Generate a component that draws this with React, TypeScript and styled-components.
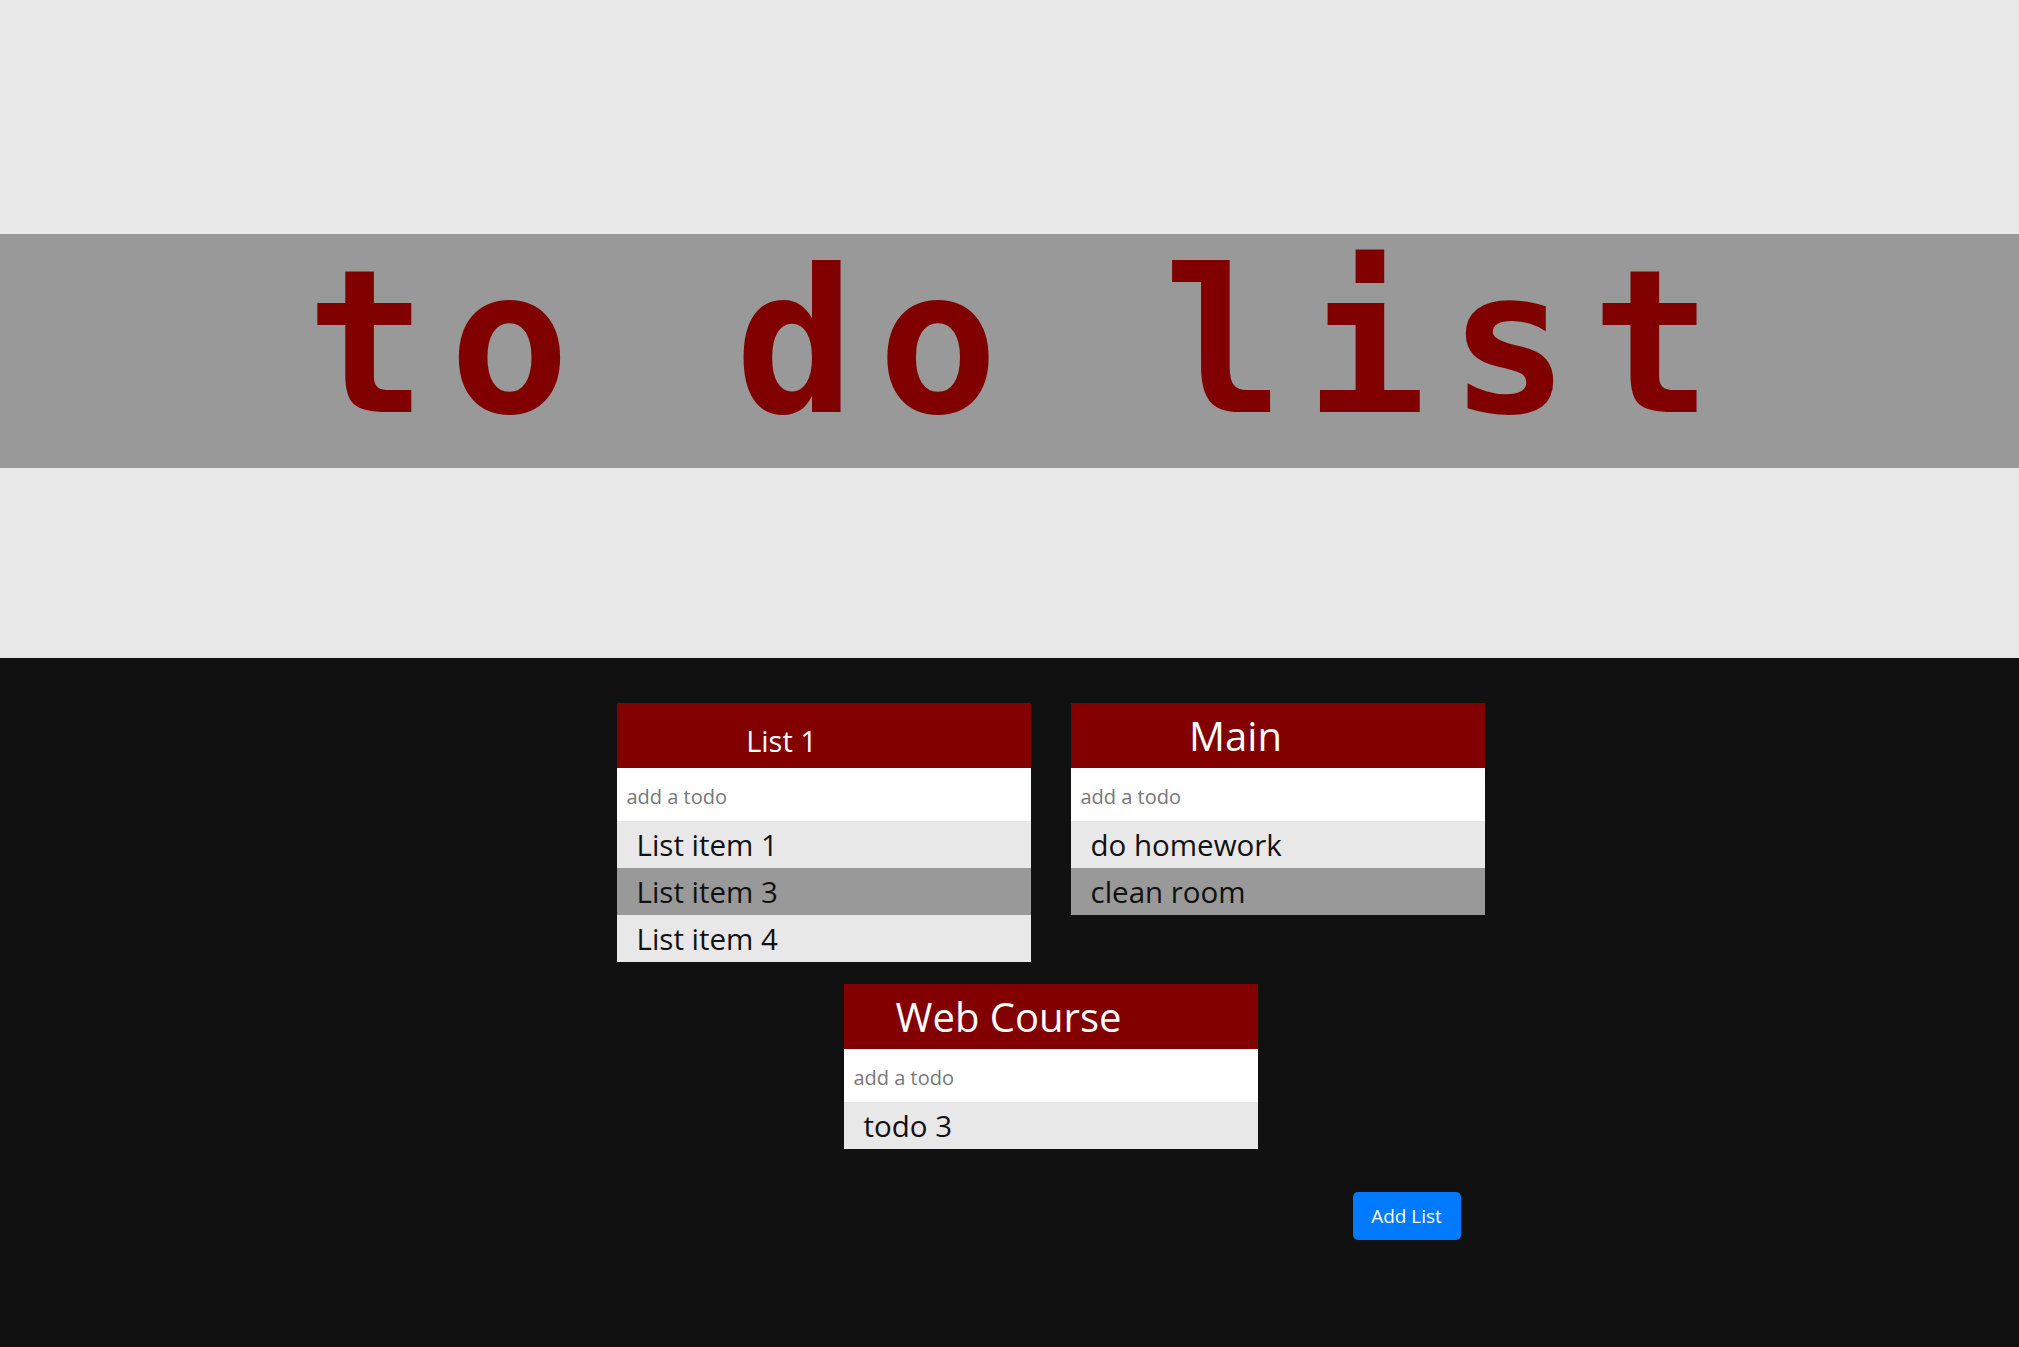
import React from "react";
import styled, { createGlobalStyle } from "styled-components";

const GlobalStyle = createGlobalStyle`
  html, body {
    margin: 0;
    padding: 0;
    background: #111111;
    font-family: "Open Sans", "Noto Sans", Arial, sans-serif;
  }
  * { box-sizing: border-box; }
`;

const Hero = styled.header`
  background: #e8e8e8;
  padding-top: 234px;
  padding-bottom: 190px;
`;

const Banner = styled.h1`
  margin: 0;
  background: #999999;
  color: #800000;
  font-family: "DejaVu Sans Mono", "Liberation Mono", monospace;
  font-weight: bold;
  font-size: 200px;
  letter-spacing: 22.4px;
  line-height: 218px;
  padding: 0 0 16px 22px;
  text-align: center;
  white-space: pre;
`;

const Main = styled.main`
  padding: 45px 0 60px 82px;
`;

const Board = styled.section`
  width: 1000px;
  margin: 0 auto;
  display: flex;
  flex-wrap: wrap;
  justify-content: center;
  align-items: flex-start;
  column-gap: 40px;
  row-gap: 22px;
`;

const Card = styled.div`
  width: 414px;
  display: flex;
  flex-direction: column;
`;

const CardHeader = styled.div`
  height: 65px;
  background: #820000;
  padding-right: 84px;
  text-align: center;
  overflow: hidden;
`;

const CardTitle = styled.h2<{ $small?: boolean }>`
  margin: 0;
  color: #ffffff;
  font-weight: 400;
  font-size: ${(p) => (p.$small ? "29px" : "40px")};
  line-height: ${(p) => (p.$small ? "55px" : "65px")};
  padding-top: ${(p) => (p.$small ? "10px" : "0")};
`;

const TodoInput = styled.input`
  display: block;
  width: 100%;
  height: 53px;
  border: none;
  outline: none;
  background: #ffffff;
  padding: 3px 10px 0;
  font-family: "Open Sans", "Noto Sans", Arial, sans-serif;
  font-size: 20px;
  color: #222;
  &::placeholder {
    color: #777777;
  }
`;

const ItemList = styled.ul`
  list-style: none;
  margin: 0;
  padding: 0;
`;

const Item = styled.li<{ $done?: boolean }>`
  height: 47px;
  line-height: 47px;
  padding-left: 20px;
  font-size: 29.5px;
  color: #111111;
  background: ${(p) => (p.$done ? "#999999" : "#e8e8e8")};
`;

const ButtonRow = styled.div`
  width: 1000px;
  margin: 43px auto 0;
  display: flex;
  justify-content: flex-end;
  padding-right: 90px;
`;

const AddButton = styled.button`
  width: 108px;
  height: 48px;
  border: none;
  border-radius: 5px;
  background: #007bff;
  color: #ffffff;
  font-family: "Open Sans", "Noto Sans", Arial, sans-serif;
  font-size: 19px;
  cursor: pointer;
`;

type TodoList = {
  title: string;
  small?: boolean;
  items: { text: string; done?: boolean }[];
};

const lists: TodoList[] = [
  {
    title: "List 1",
    small: true,
    items: [
      { text: "List item 1" },
      { text: "List item 3", done: true },
      { text: "List item 4" },
    ],
  },
  {
    title: "Main",
    items: [{ text: "do homework" }, { text: "clean room", done: true }],
  },
  {
    title: "Web Course",
    items: [{ text: "todo 3" }],
  },
];

export default function App() {
  return (
    <>
      <GlobalStyle />
      <Hero>
        <Banner>to do list</Banner>
      </Hero>
      <Main>
        <Board>
          {lists.map((l) => (
            <Card key={l.title}>
              <CardHeader>
                <CardTitle $small={l.small}>{l.title}</CardTitle>
              </CardHeader>
              <TodoInput placeholder="add a todo" />
              <ItemList>
                {l.items.map((it) => (
                  <Item key={it.text} $done={it.done}>
                    {it.text}
                  </Item>
                ))}
              </ItemList>
            </Card>
          ))}
        </Board>
        <ButtonRow>
          <AddButton>Add List</AddButton>
        </ButtonRow>
      </Main>
    </>
  );
}
